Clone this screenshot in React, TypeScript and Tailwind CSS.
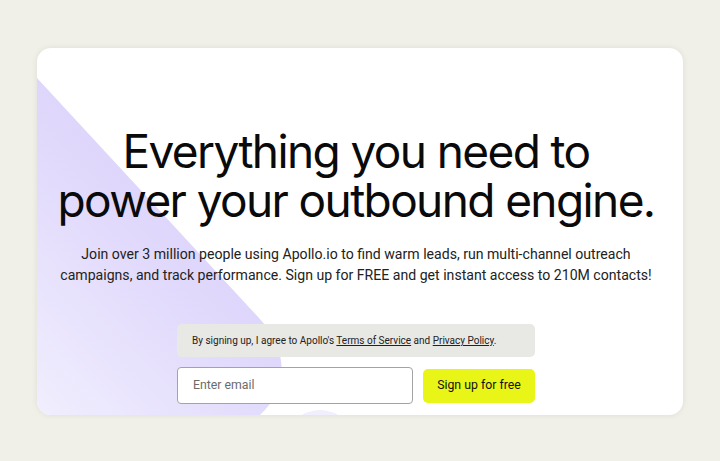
import React from 'react';

const Backdrop: React.FC = () => (
  <svg
    className="absolute inset-0 pointer-events-none"
    width="646"
    height="367"
    viewBox="0 0 646 367"
    fill="none"
  >
    <defs>
      <linearGradient id="lav" x1="0" y1="367" x2="230" y2="150" gradientUnits="userSpaceOnUse">
        <stop offset="0" stopColor="#f1eefe" />
        <stop offset="0.55" stopColor="#e2dbfc" />
        <stop offset="1" stopColor="#d8cffb" />
      </linearGradient>
    </defs>
    <path d="M0 30 L222 270 C 250 300, 254 338, 223 367 L0 367 Z" fill="url(#lav)" />
    <circle cx="283" cy="398" r="36" fill="#f1eefd" />
  </svg>
);

export default function App() {
  return (
    <div
      className="w-full h-[461px] bg-[#f0f0e8] flex justify-center pt-[48px]"
      style={{ fontFamily: 'Roboto, "Liberation Sans", sans-serif' }}
    >
      <div className="relative w-[646px] h-[367px] bg-white rounded-[14px] overflow-hidden shadow-[0_0_6px_rgba(0,0,0,0.08)]">
        <Backdrop />
        <div className="relative flex flex-col items-center pt-[79px] pr-[8px]">
          <h1
            className="text-[46px] leading-[49px] font-normal tracking-[-0.035em] text-[#0a0a0a] text-center"
            style={{ fontFamily: 'Inter, "Liberation Sans", sans-serif' }}
          >
            Everything you need to
            <br />
            power your outbound engine.
          </h1>
          <p className="mt-[19px] text-[14.1px] leading-[21px] text-[#222] text-center">
            Join over 3 million people using Apollo.io to find warm leads, run multi-channel outreach
            <br />
            campaigns, and track performance. Sign up for FREE and get instant access to 210M contacts!
          </p>

          <div className="mt-[38px] w-[358px] flex flex-col gap-[10px]">
            <div className="h-[33px] rounded-[5px] bg-[#e8e8e4] flex items-center px-[15px] text-[10px] text-[#222] whitespace-nowrap">
              <span>
                By signing up, I agree to Apollo's <span className="underline">Terms of Service</span> and{' '}
                <span className="underline">Privacy Policy</span>.
              </span>
            </div>
            <div className="flex items-center gap-[10px]">
              <div className="w-[236px] h-[37px] rounded-[4px] border border-[#a3a3a3] bg-white flex items-center px-[15px] text-[12.3px] text-[#6b6b6b]">
                Enter email
              </div>
              <button className="flex-1 h-[34px] rounded-[5px] bg-[#e9f516] text-[12.3px] text-[#111] flex items-center justify-center">
                Sign up for free
              </button>
            </div>
          </div>
        </div>
      </div>
    </div>
  );
}
